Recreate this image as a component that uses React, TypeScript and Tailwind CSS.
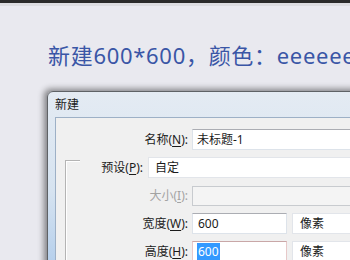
const font = "font-['Microsoft_YaHei','Noto_Sans','Noto_Sans_CJK_SC',sans-serif]"

function Label({ text, k, tail = '):', disabled = false, width }: { text: string; k: string; tail?: string; disabled?: boolean; width: string }) {
  return (
    <div className={`${width} shrink-0 text-right pr-[2px] ${disabled ? 'text-[#a3a3a3]' : 'text-[#1b1b1b]'}`}>
      {text}(<span className="underline underline-offset-2">{k}</span>{tail}
    </div>
  )
}

export default function App() {
  return (
    <div className={`w-[350px] h-[260px] overflow-hidden bg-[#e9e9ef] ${font}`}>
      {/* top edge */}
      <div className="h-[3px] bg-[#2a2a2a]" />
      <div className="h-[3px] bg-[#dcdce0]" />

      {/* heading */}
      <div className="pl-[48px] pt-[35px] h-[65px] text-[22px] leading-[28px] tracking-[0.7px] text-[#3a56a6] whitespace-nowrap">
        新建600*600，颜色：eeeeee
      </div>

      {/* dialog */}
      <div className="ml-[47px] mt-[20px] w-[420px] h-[200px] flex flex-col rounded-tl-[6px] border border-[#5f6266] bg-gradient-to-b from-[#e4ebf3] via-[#d6e3f0] to-[#a9c8ea] shadow-[-3px_-2px_6px_rgba(0,0,0,0.45)]">
        <div className="h-[25px] shrink-0 pl-[7px] pt-[5px] text-[12px] leading-[16px] text-[#1b1b1b]">新建</div>
        <div className="relative ml-[7px] flex-1 border border-[#9db0c6] bg-[#f0f0f0] pt-[11px] text-[12px] leading-[21px] flex flex-col gap-[7px]">
          {/* group box edge */}
          <div className="absolute left-[9px] top-[42px] w-[15px] h-[200px] border-l border-t border-[#b4b4b4] shadow-[inset_1px_1px_0_#ffffff]" />

          <div className="flex items-center h-[21px]">
            <Label text="名称" k="N" width="w-[134px]" />
            <div className="ml-[2px] flex-1 h-[21px] bg-white border border-[#dde3ea] border-t-[#abadb3] pl-[4px] leading-[19px] text-[#1b1b1b]">未标题-1</div>
          </div>

          <div className="relative flex items-center h-[21px]">
            <Label text="预设" k="P" width="w-[89px]" />
            <div className="ml-[3px] flex-1 h-[21px] bg-white border border-[#e2e5ea] pl-[6px] leading-[19px] text-[#1b1b1b]">自定</div>
          </div>

          <div className="flex items-center h-[21px]">
            <Label text="大小" k="I" width="w-[134px]" disabled />
            <div className="ml-[2px] flex-1 h-[20px] bg-[#f4f4f4] border border-[#c8cbcf]" />
          </div>

          <div className="flex items-center h-[21px]">
            <Label text="宽度" k="W" width="w-[134px]" />
            <div className="ml-[2px] w-[95px] h-[21px] bg-white border border-[#dde3ea] border-t-[#abadb3] pl-[5px] leading-[19px] text-[#1b1b1b]">600</div>
            <div className="ml-[5px] flex-1 h-[21px] bg-white border border-[#e2e5ea] pl-[7px] leading-[19px] text-[#1b1b1b]">像素</div>
          </div>

          <div className="flex items-center h-[21px]">
            <Label text="高度" k="H" width="w-[134px]" />
            <div className="ml-[2px] w-[95px] h-[21px] bg-white border border-[#e7c9c9] border-t-[#c9a7a7] pl-[4px] leading-[19px]">
              <span className="bg-[#3399ff] text-white px-[1px]">600</span>
            </div>
            <div className="ml-[5px] flex-1 h-[21px] bg-white border border-[#e2e5ea] pl-[7px] leading-[19px] text-[#1b1b1b]">像素</div>
          </div>
        </div>
      </div>
    </div>
  )
}
